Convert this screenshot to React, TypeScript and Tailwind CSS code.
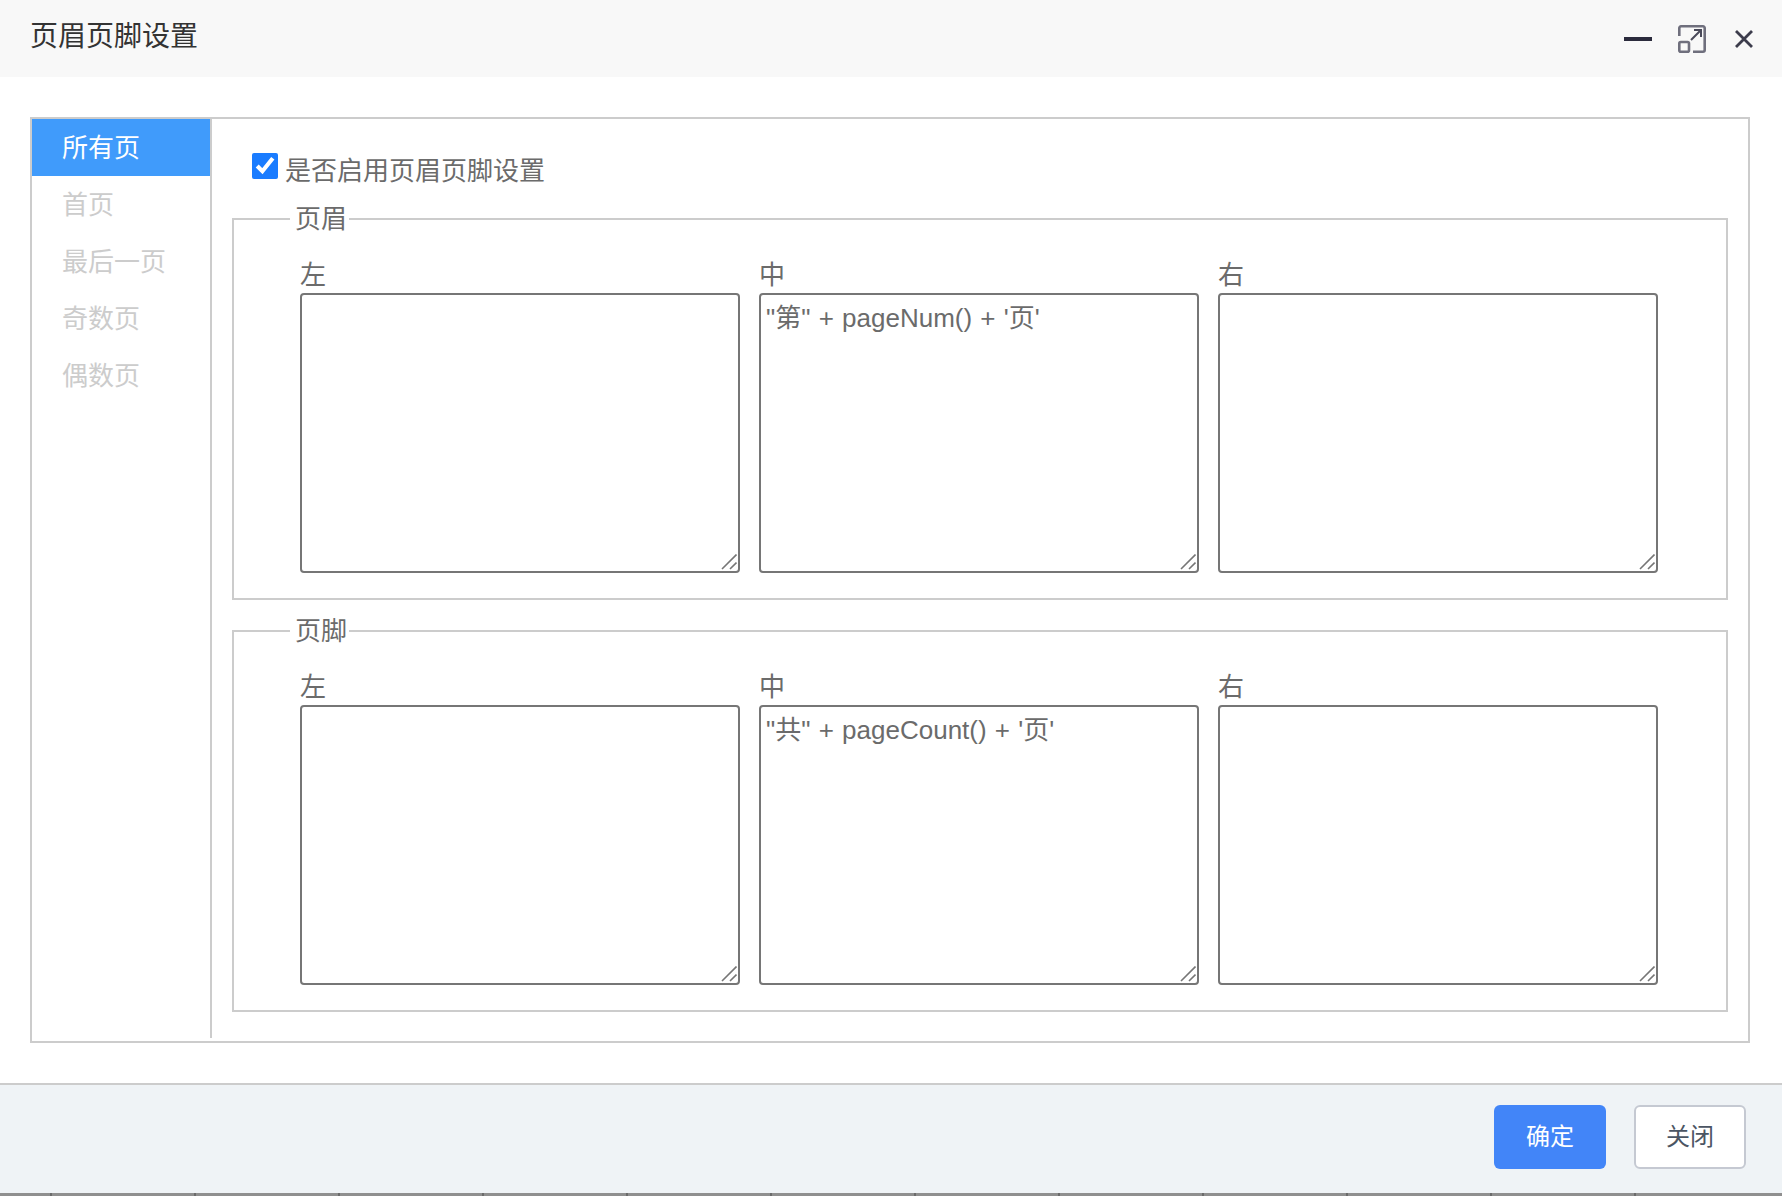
const NAV_ITEMS = ['所有页', '首页', '最后一页', '奇数页', '偶数页']

// 底部那条被裁到的表格边线,每隔 144px 一个刻度
const TICKS = Array.from({ length: 12 }, (_, i) => i)

function TextColumn({ label, value }: { label: string; value?: string }) {
  return (
    <div className="flex flex-col">
      <label className="h-[33px] text-[26px] leading-[30px] text-[#6b6b6b]">{label}</label>
      <div className="relative h-[280px]">
        <textarea
          readOnly
          defaultValue={value}
          className="block h-full w-full resize-none rounded-[4px] border-2 border-[#767676] px-[5px] py-[8px] text-[26px] leading-[30px] text-[#6b6b6b] outline-none [word-spacing:1px]"
        />
        {/* 右下角的拖拽手柄 */}
        <svg width="16" height="16" viewBox="0 0 16 16" fill="none" stroke="#767676" strokeWidth="1.6" className="absolute bottom-[3px] right-[3px]">
          <path d="M1 15 15.5 0.5M9 15 15.5 8.5" />
        </svg>
      </div>
    </div>
  )
}

function HeaderFooterGroup({ title, center }: { title: string; center: string }) {
  return (
    <fieldset className="h-[396px] border-2 border-solid border-[#ccc]">
      <legend className="ml-[56px] pl-[5px] pr-[2px] text-[26px] leading-[30px] text-[#6b6b6b]">{title}</legend>
      <div className="ml-[66px] mt-[26px] grid w-[1358px] grid-cols-3 gap-x-[19px]">
        <TextColumn label="左" />
        <TextColumn label="中" value={center} />
        <TextColumn label="右" />
      </div>
    </fieldset>
  )
}

export default function App() {
  return (
    <div className="flex h-[1196px] w-[1782px] flex-col overflow-hidden bg-white font-['Liberation_Sans','Noto_Sans_CJK_SC',sans-serif]">
      {/* 标题栏 */}
      <div className="flex h-[77px] shrink-0 items-center justify-between bg-[#f8f8f8] pl-[30px] pr-[28px]">
        <span className="pb-[3px] text-[28px] leading-[40px] text-[#333]">页眉页脚设置</span>
        <div className="flex items-center">
          <div className="h-[4px] w-[28px] bg-[#2b2b3d]" />
          <svg width="28" height="28" viewBox="0 0 28 28" fill="none" stroke="#6f6f7d" strokeWidth="2.6" className="ml-[26px]">
            <path d="M1.3 11V3a1.7 1.7 0 0 1 1.7-1.7h22a1.7 1.7 0 0 1 1.7 1.7v22a1.7 1.7 0 0 1-1.7 1.7H15" />
            <rect x="1.3" y="17" width="9.7" height="9.7" rx="1.5" />
            <path d="M13 15 23 5M16 5h7v7" stroke="#4a4a5a" strokeWidth="2" />
          </svg>
          <svg width="20" height="20" viewBox="0 0 20 20" fill="none" stroke="#3c3c4c" strokeWidth="2.8" className="ml-[28px]">
            <path d="M2 2 18 18M18 2 2 18" />
          </svg>
        </div>
      </div>

      {/* 主体 */}
      <div className="flex-1 px-[30px] pt-[40px]">
        <div className="flex h-[926px] w-[1720px] border-2 border-[#ccc]">
          <div className="h-[919px] w-[180px] shrink-0 border-r-2 border-[#ccc]">
            {NAV_ITEMS.map((item, i) => (
              <div
                key={item}
                className={
                  i === 0
                    ? 'h-[57px] bg-[#409bfb] pl-[30px] pt-[1px] text-[26px] leading-[57px] text-white'
                    : 'h-[57px] pl-[30px] pt-[1px] text-[26px] leading-[57px] text-[#ccc]'
                }
              >
                {item}
              </div>
            ))}
          </div>

          <div className="flex-1 px-[20px]">
            <div className="flex h-[85px] items-start pl-[20px] pt-[34px]">
              <input type="checkbox" defaultChecked className="h-[26px] w-[26px] accent-[#1a7cff]" />
              <span className="ml-[7px] mt-[3px] text-[26px] leading-[30px] text-[#6b6b6b]">是否启用页眉页脚设置</span>
            </div>
            <div className="flex flex-col gap-[16px]">
              <HeaderFooterGroup title="页眉" center={`"第" + pageNum() + '页'`} />
              <HeaderFooterGroup title="页脚" center={`"共" + pageCount() + '页'`} />
            </div>
          </div>
        </div>
      </div>

      {/* 底部按钮 */}
      <div className="flex h-[110px] shrink-0 items-start justify-end gap-[28px] border-t-2 border-[#ccc] bg-[#eff3f6] pr-[36px] pt-[20px]">
        <button className="h-[64px] w-[112px] rounded-[6px] bg-[#4285f8] text-[24px] text-white">确定</button>
        <button className="h-[64px] w-[112px] rounded-[6px] border-2 border-[#c5c9d2] bg-white text-[24px] text-[#4b5563]">关闭</button>
      </div>
      <div className="flex h-[3px] shrink-0 bg-[#8f8f8f] pl-[50px]">
        {TICKS.map((t) => (
          <div key={t} className="h-[3px] w-[144px] border-l-2 border-[#6b6b6b]" />
        ))}
      </div>
    </div>
  )
}
